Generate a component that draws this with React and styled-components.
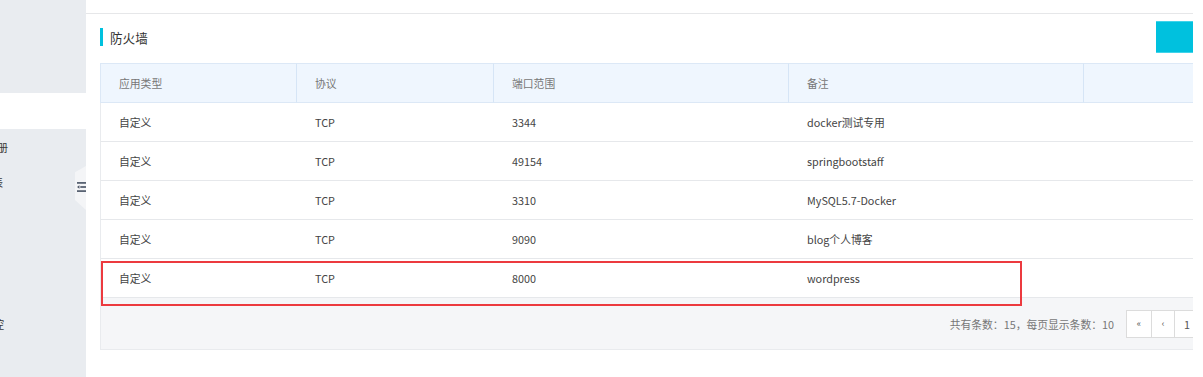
import React from 'react';
import styled, { createGlobalStyle } from 'styled-components';

const Global = createGlobalStyle`
  html, body { margin: 0; padding: 0; background: #fff; }
  body {
    font-family: "Noto Sans CJK SC", "Noto Sans", sans-serif;
    font-size: 10.8px;
    color: #333;
    overflow: hidden;
  }
  * { box-sizing: border-box; }
`;

const Page = styled.div`
  display: flex;
  width: 1203px;
  height: 377px;
  overflow: hidden;
`;

const Sidebar = styled.aside`
  position: relative;
  width: 86px;
  flex: none;
  display: flex;
  flex-direction: column;
`;

const SideTop = styled.div`
  height: 93px;
  background: #e9ecf0;
`;

const SideGap = styled.div`
  height: 36px;
  background: #fff;
`;

const SideMenu = styled.nav`
  flex: 1;
  background: #e9ecf0;
  overflow: hidden;
  display: flex;
  flex-direction: column;
`;

const MenuItem = styled.div`
  height: 35.5px;
  flex: none;
  width: ${p => p.$edge}px;
  display: flex;
  justify-content: flex-end;
  align-items: center;
  white-space: nowrap;
  color: #3a3a3a;
`;

const Handle = styled.div`
  position: absolute;
  right: 0;
  top: 166px;
  width: 11px;
  height: 44px;
  background: #f4f5f7;
  clip-path: polygon(100% 0, 0 14%, 0 77%, 100% 100%);
  display: flex;
  align-items: center;
  padding-left: 2px;
  padding-bottom: 3px;
`;

const Viewport = styled.main`
  width: 1107px;
  flex: none;
  overflow: hidden;
`;

const TopStrip = styled.div`
  height: 14px;
  border-bottom: 1px solid #e6e7e9;
  width: 1107px;
`;

const Section = styled.section`
  width: 1210px;
  padding-left: 14px;
`;

const TitleRow = styled.div`
  display: flex;
  justify-content: space-between;
  align-items: center;
  height: 49px;
  padding-bottom: 3px;
  width: 1196px;
`;

const Title = styled.h2`
  margin: 0;
  display: flex;
  align-items: center;
  gap: 7px;
  font-size: 12.6px;
  font-weight: 400;
  color: #333;
  &::before {
    content: "";
    width: 3px;
    height: 18px;
    background: #00c1de;
  }
`;

const AddButton = styled.button`
  width: 140px;
  height: 32px;
  border: none;
  border-top: 1px solid #40d3ea;
  border-bottom: 1px solid #40d3ea;
  background: #00c1de;
  color: #fff;
  font: inherit;
  padding: 0;
`;

const TableWrap = styled.div`
  position: relative;
  width: 1196px;
`;

const Table = styled.table`
  width: 100%;
  table-layout: fixed;
  border-collapse: separate;
  border-spacing: 0;
`;

const HeadCell = styled.th`
  height: 40px;
  padding: 0 18px;
  text-align: left;
  font-weight: 400;
  color: #777;
  background: #eff6fe;
  border-top: 1px solid #dce8f6;
  border-bottom: 1px solid #dce8f6;
  border-right: 1px solid #d6e5f6;
  &:first-child { border-left: 1px solid #dce8f6; }
  &:last-child { border-right: none; }
`;

const Cell = styled.td`
  height: 39px;
  padding: 0 18px;
  color: #444;
  white-space: nowrap;
  border-bottom: 1px solid #e6e8eb;
  &:first-child { border-left: 1px solid #e9ebee; }
`;

const Footer = styled.div`
  height: 52px;
  display: flex;
  justify-content: flex-end;
  align-items: center;
  gap: 13px;
  padding-right: 23px;
  background: #f5f6f8;
  border-left: 1px solid #e9ebee;
  border-bottom: 1px solid #e9ebee;
`;

const Summary = styled.span`
  color: #777;
`;

const Pager = styled.div`
  display: flex;
`;

const PageButton = styled.button`
  height: 28px;
  min-width: ${p => p.$w}px;
  padding: 0;
  margin-left: -1px;
  border: 1px solid #dcdcdc;
  background: #fff;
  color: #555;
  font: inherit;
  font-size: ${p => (p.$small ? 9 : 10.8)}px;
`;

const Highlight = styled.div`
  position: absolute;
  left: 1px;
  top: 198px;
  width: 921px;
  height: 45px;
  border: 2px solid #ec3a3f;
  pointer-events: none;
`;

const columns = ['应用类型', '协议', '端口范围', '备注', ''];
const widths = [197, 197, 295, 295, 212];

const rows = [
  ['自定义', 'TCP', '3344', 'docker测试专用'],
  ['自定义', 'TCP', '49154', 'springbootstaff'],
  ['自定义', 'TCP', '3310', 'MySQL5.7-Docker'],
  ['自定义', 'TCP', '9090', 'blog个人博客'],
  ['自定义', 'TCP', '8000', 'wordpress'],
];

const menu = [
  { text: '用户手册', edge: 8 },
  { text: '服务列表', edge: 3 },
  { text: '', edge: 0 },
  { text: '', edge: 0 },
  { text: '', edge: 0 },
  { text: '云监控', edge: 4 },
];

const IndentIcon = () => (
  <svg width="11" height="14" viewBox="0 0 11 14" fill="#4b5566">
    <rect x="0" y="1" width="11" height="2" />
    <polygon points="0,7 3,5 3,9" />
    <rect x="4" y="6" width="7" height="2" />
    <rect x="0" y="11" width="11" height="2" />
  </svg>
);

export default function App() {
  return (
    <>
      <Global />
      <Page>
        <Sidebar>
          <SideTop />
          <SideGap />
          <SideMenu>
            {menu.map((m, i) => (
              <MenuItem key={i} $edge={m.edge}>
                {m.text && <span>{m.text}</span>}
              </MenuItem>
            ))}
          </SideMenu>
          <Handle>
            <IndentIcon />
          </Handle>
        </Sidebar>
        <Viewport>
          <TopStrip />
          <Section>
            <TitleRow>
              <Title>防火墙</Title>
              <AddButton>添加规则</AddButton>
            </TitleRow>
            <TableWrap>
              <Table>
                <colgroup>
                  {widths.map((w, i) => (
                    <col key={i} style={{ width: w }} />
                  ))}
                </colgroup>
                <thead>
                  <tr>
                    {columns.map((c, i) => (
                      <HeadCell key={i}>{c}</HeadCell>
                    ))}
                  </tr>
                </thead>
                <tbody>
                  {rows.map((r, i) => (
                    <tr key={i}>
                      {r.map((c, j) => (
                        <Cell key={j}>{c}</Cell>
                      ))}
                      <Cell />
                    </tr>
                  ))}
                </tbody>
              </Table>
              <Footer>
                <Summary>共有条数：15，每页显示条数：10</Summary>
                <Pager>
                  <PageButton $w={26} $small>«</PageButton>
                  <PageButton $w={24} $small>‹</PageButton>
                  <PageButton $w={26}>1</PageButton>
                  <PageButton $w={26}>2</PageButton>
                  <PageButton $w={24} $small>›</PageButton>
                  <PageButton $w={26} $small>»</PageButton>
                </Pager>
              </Footer>
              <Highlight />
            </TableWrap>
          </Section>
        </Viewport>
      </Page>
    </>
  );
}
